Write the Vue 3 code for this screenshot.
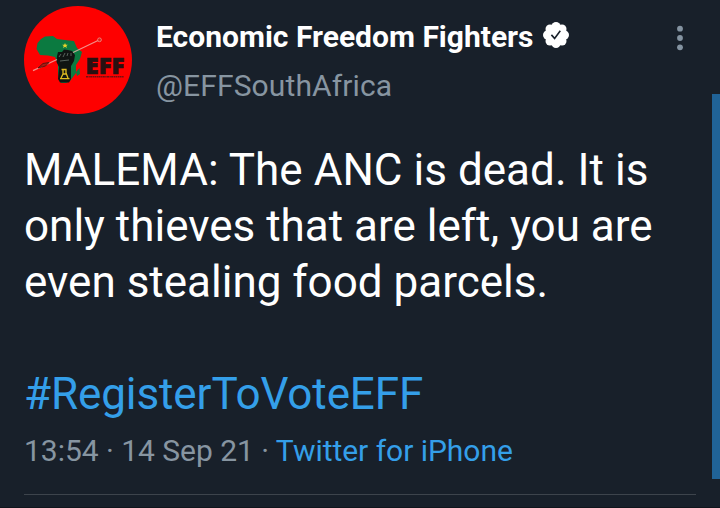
<template>
    <main class="tweet">
        <header class="tweet-header">
            <svg class="avatar" viewBox="0 0 108 108" role="img" aria-label="EFF">
                <circle cx="54" cy="54" r="54" fill="#fe0000" />
                <!-- África -->
                <path fill="#0b7a40" d="M17 33 L21 30.500 L29 30 L33 33 L41 34 L50 35 L53 42 L58 46 L56 53 L52 59 L52 67 L46 75 L42 77 L37 77 L34 68 L34 58 L31 51 L24 49.500 L16 49 L12.500 43 L13.500 37Z" />
                <path fill="#0b7a40" d="M55.500 62 L56 68 L53 70 L52 66Z" />
                <!-- Punho -->
                <path fill="#101512" d="M33 50 L34 46 L38 46 L40 43.500 L44 44 L48 45 L51 49 L50 55 L47 60 L47 73 L45 76.500 L36 76.500 L34 73 L35 61 L32.500 56Z" />
                <path d="M35 51 l2 -3 M39 51 l2 -4 M43 50 l1 -3 M47 50 l0 -3 M36 55 l9 -1" stroke="#77857d" stroke-width="0.700" fill="none" />
                <!-- Lança -->
                <path d="M9 64.700 L33 53.500 M49 46.500 L74 34.500" stroke="#efb2aa" stroke-opacity="0.800" stroke-width="1.300" fill="none" />
                <path d="M14 62 L19 57.500 L25 56.500 L21.500 60Z" fill="#a81b12" stroke="#43130d" stroke-width="0.800" />
                <circle cx="75.500" cy="33.800" r="1.900" fill="#e0201a" stroke="#ee958c" stroke-width="0.800" />
                <path fill="#e8d52d" d="M41 37 l.8 1.800 h2 l-1.500 1.200 l.6 2 l-1.900 -1.200 l-1.900 1.200 l.6 -2 l-1.500 -1.200 h2Z" />
                <path d="M37.500 63.500 H42 V67 L44 72 M39 64 V68 L37 72 M36 72.700 H45.500 M39 68 H43" stroke="#dfbc20" stroke-width="1.300" fill="none" />
                <text class="logo-text" x="61.500" y="67.800" textLength="39" lengthAdjust="spacingAndGlyphs">EFF</text>
                <!-- Lema miúdo embaixo da sigla -->
                <path d="M62 70.700 H100" stroke="#701010" stroke-width="1.600" stroke-dasharray="2 .5 1.300 .4" />
            </svg>
            <div class="author">
                <div class="name-row">
                    <span class="name">Economic Freedom Fighters</span>
                    <svg class="verified" viewBox="0 0 26 26">
                        <g fill="#fff">
                            <circle cx="13" cy="13" r="11" />
                            <circle v-for="p in petals" :key="p.id" :cx="p.x" :cy="p.y" r="4.500" />
                        </g>
                        <path d="M8.400 12.900 L11.600 16.400 L17.300 8.800" fill="none" stroke="#18202a" stroke-width="1.600" />
                    </svg>
                </div>
                <span class="handle">@EFFSouthAfrica</span>
            </div>
            <svg class="menu" viewBox="0 0 6 26">
                <circle v-for="y in [3.700, 13, 22.300]" :key="y" cx="3" :cy="y" r="2.900" fill="#8493a1" />
            </svg>
        </header>

        <p class="content">
            <span class="line line-1">MALEMA: The ANC is dead. It is</span>
            <span class="line">only thieves that are left, you are</span>
            <span class="line">even stealing food parcels.</span>
        </p>
        <a class="hashtag">#RegisterToVoteEFF</a>

        <footer class="meta">
            <span class="date">13:54 · 14 Sep 21 · </span><a class="source">Twitter for iPhone</a>
        </footer>
        <div class="scroll-bar"></div>
    </main>
</template>

<script setup>
    // Pétalas em volta do selo de verificado
    const petals = Array.from({ length: 8 }, (_, i) => {
        const angle = (i * Math.PI) / 4
        return {
            id: i,
            x: 13 + 8.5 * Math.cos(angle),
            y: 13 + 8.5 * Math.sin(angle),
        }
    })
</script>

<style>
    body {
        margin: 0;
        background: #18202a;
    }
</style>

<style scoped>
    .tweet {
        position: relative;
        box-sizing: border-box;
        width: 720px;
        height: 508px;
        padding: 0 24px;
        overflow: hidden;
        background: #18202a;
        border-bottom: 1px solid #10151c;
        font-family: Roboto, "Liberation Sans", sans-serif;
        white-space: pre;
    }

    .tweet-header {
        display: flex;
        box-sizing: border-box;
        height: 142px;
        padding-top: 6px;
    }

    .avatar {
        width: 108px;
        height: 108px;
        flex: none;
    }

    .logo-text {
        font-family: "Open Sans", sans-serif;
        font-size: 22.5px;
        font-weight: 800;
        fill: #291011;
        stroke: #291011;
        stroke-width: 0.6px;
    }

    .author {
        display: flex;
        flex-direction: column;
        gap: 13px;
        margin-left: 24px;
        padding-top: 13px;
    }

    .name-row {
        display: flex;
        align-items: center;
        height: 36px;
    }

    .name {
        font-size: 30px;
        font-weight: 700;
        line-height: 36px;
        color: #fff;
    }

    .verified {
        width: 26px;
        height: 26px;
        margin: 0 0 4px 10px;
    }

    .handle {
        font-size: 30px;
        line-height: 36px;
        letter-spacing: 0.12px;
        color: #8795a1;
    }

    .menu {
        width: 6px;
        height: 26px;
        margin: 19px 13px 0 auto;
    }

    .content {
        display: flex;
        flex-direction: column;
        align-items: flex-start;
        margin: 0 0 56px;
    }

    .line,
    .hashtag {
        font-size: 44px;
        line-height: 56px;
        color: #fff;
    }

    .line-1 {
        letter-spacing: 0.04px;
    }

    .hashtag {
        display: block;
        letter-spacing: -0.1px;
        color: #349fe9;
    }

    .meta {
        box-sizing: border-box;
        height: 73px;
        padding-top: 11px;
        border-bottom: 1px solid #3d444c;
        font-size: 30px;
        line-height: 36px;
        letter-spacing: -0.03px;
        color: #8795a1;
    }

    .source {
        color: #349fe9;
    }

    .scroll-bar {
        position: absolute;
        top: 94px;
        right: 0;
        width: 8px;
        height: 385px;
        background: #206397;
    }
</style>
